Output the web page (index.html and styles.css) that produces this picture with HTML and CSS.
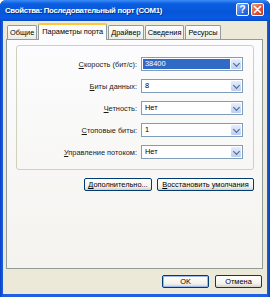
FILE: index.html
```html
<!DOCTYPE html>
<html lang="ru">

<head>
  <meta charset="UTF-8">
  <title>Свойства: Последовательный порт (COM1)</title>
  <link rel="stylesheet" href="styles.css">
</head>

<body>

  <div class="window">
    <!-- Title bar -->
    <div class="titlebar">
      <span class="title">Свойства: Последовательный порт (COM1)</span>
      <div class="title-buttons">
        <div class="tbtn help">?</div>
        <div class="tbtn close">
          <svg width="9" height="9" viewBox="0 0 9 9">
            <path d="M1.5 1.5 L7.5 7.5 M7.5 1.5 L1.5 7.5" stroke="#fff" stroke-width="1.6" stroke-linecap="round" />
          </svg>
        </div>
      </div>
    </div>

    <div class="client">
      <!-- Tabs -->
      <div class="tabs">
        <div class="tab">Общие</div>
        <div class="tab active">Параметры порта</div>
        <div class="tab">Драйвер</div>
        <div class="tab">Сведения</div>
        <div class="tab">Ресурсы</div>
      </div>

      <div class="panel">
        <div class="group">
          <div class="row">
            <label><u>С</u>корость (бит/с):</label>
            <div class="combo"><span class="value selected">38400</span><span class="arrow"></span></div>
          </div>
          <div class="row">
            <label><u>Б</u>иты данных:</label>
            <div class="combo"><span class="value">8</span><span class="arrow"></span></div>
          </div>
          <div class="row">
            <label><u>Ч</u>етность:</label>
            <div class="combo"><span class="value">Нет</span><span class="arrow"></span></div>
          </div>
          <div class="row">
            <label><u>С</u>топовые биты:</label>
            <div class="combo"><span class="value">1</span><span class="arrow"></span></div>
          </div>
          <div class="row">
            <label><u>У</u>правление потоком:</label>
            <div class="combo"><span class="value">Нет</span><span class="arrow"></span></div>
          </div>
        </div>

        <div class="panel-buttons">
          <button class="btn btn-advanced"><u>Д</u>ополнительно...</button>
          <button class="btn btn-restore"><u>В</u>осстановить умолчания</button>
        </div>
      </div>

      <!-- Dialog buttons -->
      <div class="footer">
        <button class="btn btn-dialog default">OK</button>
        <button class="btn btn-dialog">Отмена</button>
      </div>
    </div>
  </div>

</body>

</html>
```

FILE: styles.css
```css
/* Global Styles */
* {
  box-sizing: border-box;
}

body,
html {
  margin: 0;
  padding: 0;
  background-color: #fff;
  font-family: 'Liberation Sans', Arial, sans-serif;
}

u {
  text-decoration: underline;
  text-underline-offset: 1px;
}

/* Window */
.window {
  width: 270px;
  height: 297px;
  background: linear-gradient(to right, #0842C6, #1F5FE0 3px, #1F5FE0 calc(100% - 3px), #0A3FB8);
  border-radius: 6px 6px 0 0;
  display: flex;
  flex-direction: column;
}

.titlebar {
  height: 21px;
  display: flex;
  align-items: center;
  justify-content: space-between;
  padding: 0 6px 0 5px;
  border-radius: 6px 6px 0 0;
  background: linear-gradient(to bottom, #3C8CF7 0%, #0B5EE0 18%, #0655D8 60%, #0A5CE6 85%, #0749C4 100%);
}

.title {
  color: #fff;
  font-weight: bold;
  font-size: 7.8px;
  letter-spacing: -0.3px;
  text-shadow: 1px 1px 0 #0A2C8A;
}

.title-buttons {
  display: flex;
  gap: 2px;
  margin-top: -2px;
}

.tbtn {
  width: 13px;
  height: 13px;
  border: 1px solid #fff;
  border-radius: 2px;
  display: flex;
  align-items: center;
  justify-content: center;
  color: #fff;
  font-weight: bold;
  font-size: 10px;
}

.help {
  background: linear-gradient(135deg, #7FB0FA, #2F6FE8 60%, #1F55D0);
}

.close {
  background: linear-gradient(135deg, #F0A080, #E0563A 55%, #C8361C);
}

/* Client area */
.client {
  flex: 1;
  margin: 0 3px 3px 3px;
  background-color: #ECE9D8;
  display: flex;
  flex-direction: column;
  padding: 2px 4px 0 3px;
}

/* Tabs */
.tabs {
  display: flex;
  align-items: flex-end;
  height: 16px;
  padding-left: 1px;
  position: relative;
  z-index: 1;
}

.tab {
  height: 14px;
  padding: 0 2px;
  font-size: 7.4px;
  line-height: 13px;
  color: #000;
  background: linear-gradient(to bottom, #FFFFFF, #ECEBE5);
  border: 1px solid #919B9C;
  border-bottom: none;
  border-radius: 2px 2px 0 0;
  margin-right: 1px;
}

.tab.active {
  height: 17px;
  line-height: 14px;
  background: #FCFCFE;
  border-top: 2px solid #FFC83C;
  margin-bottom: -1px;
  padding: 0 3px;
}

.panel {
  height: 230px;
  border: 1px solid #919B9C;
  background: linear-gradient(to bottom, #FCFCFE, #F4F3EE);
  padding: 5px 8px 0 9px;
}

/* Group box */
.group {
  border: 1px solid #D0D0BF;
  border-radius: 3px;
  padding: 11px 0 10px 0;
  display: flex;
  flex-direction: column;
  gap: 8px;
}

.row {
  display: flex;
  align-items: center;
  height: 14px;
}

.row label {
  width: 120px;
  text-align: right;
  font-size: 7.4px;
  color: #1A1A1A;
  margin-right: 4px;
}

.combo {
  width: 102px;
  height: 14px;
  background-color: #fff;
  border: 1px solid #7F9DB9;
  display: flex;
  align-items: center;
  padding: 0 1px;
}

.value {
  flex: 1;
  height: 10px;
  line-height: 10px;
  font-size: 7.4px;
  padding-left: 2px;
  color: #000;
}

.value.selected {
  background-color: #316AC5;
  color: #fff;
  margin-right: 1px;
}

.arrow {
  width: 10px;
  height: 10px;
  border-radius: 1px;
  background: linear-gradient(to bottom, #E6EEFC, #B9CEF5);
  position: relative;
}

.arrow::after {
  content: '';
  position: absolute;
  left: 3px;
  top: 2px;
  width: 4px;
  height: 4px;
  border-right: 1.5px solid #4D6185;
  border-bottom: 1.5px solid #4D6185;
  transform: rotate(45deg);
}

/* Buttons */
.btn {
  font-family: 'Liberation Sans', Arial, sans-serif;
  font-size: 7.4px;
  color: #000;
  height: 13px;
  padding: 0;
  border: 1px solid #003C74;
  border-radius: 2px;
  background: linear-gradient(to bottom, #FFFFFF, #F3F2EC 70%, #D6D0C5);
  cursor: pointer;
}

.panel-buttons {
  display: flex;
  justify-content: flex-end;
  gap: 5px;
  margin-top: 8px;
}

.btn-advanced {
  width: 68px;
}

.btn-restore {
  width: 97px;
}

.footer {
  display: flex;
  justify-content: flex-end;
  gap: 6px;
  margin-top: 6px;
  margin-right: 1px;
}

.btn-dialog {
  width: 47px;
}

.btn.default {
  box-shadow: inset 0 0 0 1px #9DB8EC;
}
```
